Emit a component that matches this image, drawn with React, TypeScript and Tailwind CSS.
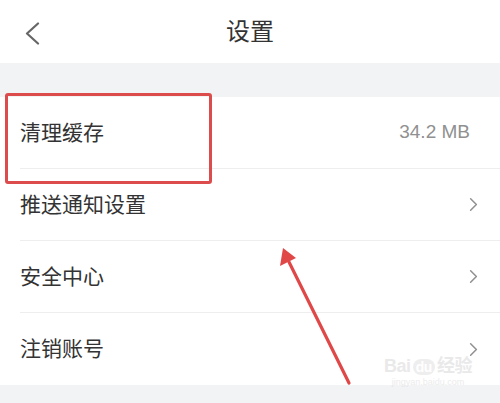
import { ChevronRight } from "lucide-react";

const rows = [
  { label: "清理缓存", value: "34.2 MB" },
  { label: "推送通知设置" },
  { label: "安全中心" },
  { label: "注销账号" },
];

function App() {
  return (
    <main
      className="relative h-[403px] w-[500px] overflow-hidden bg-[#f2f3f5] text-[#333]"
      style={{ fontFamily: '"Liberation Sans", "Noto Sans CJK SC", sans-serif' }}
    >
      {/* header */}
      <header className="relative flex h-[63px] items-center justify-center bg-white">
        <svg
          className="absolute left-[25px] top-[22px]"
          width="15"
          height="23"
          viewBox="0 0 15 23"
          fill="none"
          stroke="#666"
          strokeWidth="2.2"
          strokeLinecap="round"
          strokeLinejoin="round"
        >
          <path d="M13 1.5 2 11.5l11 10" />
        </svg>
        <h1 className="text-[24px] leading-none text-[#333]">设置</h1>
      </header>

      {/* list */}
      <section className="mt-[34px] bg-white">
        {rows.map((row, i) => (
          <div key={row.label} className="pl-5">
            <div
              className={
                "flex h-[72px] items-center justify-between pr-5 " +
                (i < rows.length - 1 ? "border-b border-[#eeeeee]" : "")
              }
            >
              <span className="text-[21px] text-[#333]">{row.label}</span>
              {row.value ? (
                <span className="pr-[10px] text-[19px] text-[#909090]">{row.value}</span>
              ) : (
                <ChevronRight className="mr-[-5px] h-[23px] w-[23px] text-[#919191]" strokeWidth={1.6} />
              )}
            </div>
          </div>
        ))}
      </section>

      {/* annotation: red box */}
      <div className="pointer-events-none absolute left-[5px] top-[93px] h-[91px] w-[207px] rounded-[3px] border-[3px] border-[#dc4c4c]" />

      {/* annotation: arrow */}
      <svg className="pointer-events-none absolute left-0 top-0" width="500" height="403">
        <line x1="349" y1="383" x2="289" y2="262" stroke="#e04848" strokeWidth="3.2" strokeLinecap="round" />
        <polygon points="283,248 280,266 296,258" fill="#e04848" />
      </svg>

      {/* watermark */}
      <div className="pointer-events-none absolute left-[384px] top-[357px] flex flex-col items-center opacity-60">
        <span className="text-[18px] font-bold leading-none tracking-tight text-[#dcdcdc]">
          Bai<span className="mx-[2px] rounded-full bg-[#e4e4e4] px-[3px] text-[14px] text-white">du</span>经验
        </span>
        <span className="mt-[3px] text-[9px] leading-none text-[#e0e0e0]">jingyan.baidu.com</span>
      </div>
    </main>
  );
}

export default App;
